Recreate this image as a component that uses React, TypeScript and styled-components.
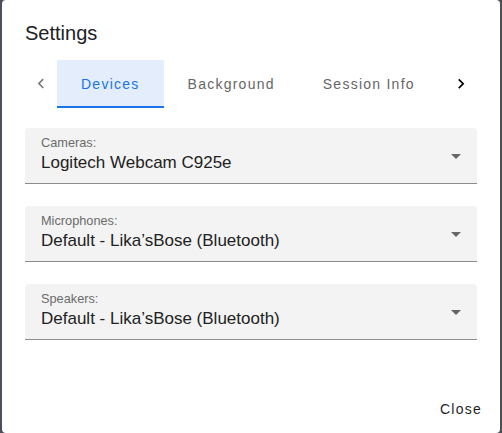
import React from "react";
import styled, { createGlobalStyle } from "styled-components";

const Global = createGlobalStyle`
  html, body { margin: 0; padding: 0; }
  body {
    background: #4b4f57;
    font-family: "Liberation Sans", Arial, Helvetica, sans-serif;
    overflow: hidden;
  }
`;

const Dialog = styled.div`
  box-sizing: border-box;
  margin-left: 2px;
  width: 498px;
  height: 433px;
  background: #ffffff;
  border-radius: 4px;
  display: flex;
  flex-direction: column;
`;

const Title = styled.h2`
  margin: 0;
  padding: 17px 23px 0;
  font-size: 20px;
  line-height: 32px;
  font-weight: 400;
  color: #202124;
`;

const Content = styled.div`
  padding: 11px 23px 0;
  display: flex;
  flex-direction: column;
`;

const TabsBar = styled.div`
  display: flex;
  align-items: stretch;
  height: 48px;
`;

const ScrollButton = styled.button<{ $active?: boolean }>`
  width: 32px;
  flex: none;
  border: 0;
  background: transparent;
  padding: 0;
  display: flex;
  align-items: center;
  justify-content: center;
  color: ${(p) => (p.$active ? "#000000" : "#7a7a7a")};
`;

const TabList = styled.div`
  flex: 1;
  display: flex;
  overflow: hidden;
`;

const Tab = styled.button<{ $selected?: boolean }>`
  flex: none;
  border: 0;
  padding: 2px 24px 0;
  margin: 0;
  font-family: inherit;
  font-size: 14px;
  line-height: 20px;
  letter-spacing: 1.25px;
  background: ${(p) => (p.$selected ? "#e3edfb" : "transparent")};
  color: ${(p) => (p.$selected ? "#1a73e8" : "#666666")};
  border-bottom: 2px solid ${(p) => (p.$selected ? "#1a73e8" : "transparent")};
  display: flex;
  align-items: center;
`;

const Fields = styled.div`
  margin-top: 20px;
  display: flex;
  flex-direction: column;
  gap: 22px;
`;

const SelectBox = styled.div`
  position: relative;
  box-sizing: border-box;
  height: 56px;
  background: #f3f3f3;
  border-radius: 4px 4px 0 0;
  border-bottom: 1px solid #8c8c8c;
  padding: 7px 16px 0;
  display: flex;
  flex-direction: column;
  gap: 2px;
`;

const Label = styled.span`
  font-size: 12.75px;
  line-height: 15px;
  color: #6b6b6b;
`;

const Value = styled.span`
  font-size: 17px;
  line-height: 22px;
  color: #222222;
`;

const Caret = styled.svg`
  position: absolute;
  right: 16px;
  top: 26px;
  width: 10px;
  height: 5px;
`;

const Footer = styled.div`
  margin-top: auto;
  display: flex;
  justify-content: flex-end;
  padding: 0 10px 6px 0;
`;

const TextButton = styled.button`
  border: 0;
  background: transparent;
  padding: 6px 8px;
  font-family: inherit;
  font-size: 14px;
  line-height: 24.5px;
  letter-spacing: 1.25px;
  color: #1f1f1f;
`;

const ChevronLeft = () => (
  <svg width="20" height="20" viewBox="0 0 24 24" fill="currentColor">
    <path d="M15.41 16.09l-4.58-4.59 4.58-4.59L14 5.5l-6 6 6 6z" />
  </svg>
);

const ChevronRight = () => (
  <svg width="20" height="20" viewBox="0 0 24 24" fill="currentColor">
    <path d="M8.59 16.34l4.58-4.59-4.58-4.59L10 5.75l6 6-6 6z" />
  </svg>
);

const fields = [
  { label: "Cameras:", value: "Logitech Webcam C925e" },
  { label: "Microphones:", value: "Default - Lika’sBose (Bluetooth)" },
  { label: "Speakers:", value: "Default - Lika’sBose (Bluetooth)" },
];

export default function App() {
  return (
    <>
      <Global />
      <Dialog>
        <Title>Settings</Title>
        <Content>
          <TabsBar>
            <ScrollButton>
              <ChevronLeft />
            </ScrollButton>
            <TabList>
              <Tab $selected>Devices</Tab>
              <Tab>Background</Tab>
              <Tab>Session Info</Tab>
            </TabList>
            <ScrollButton $active>
              <ChevronRight />
            </ScrollButton>
          </TabsBar>
          <Fields>
            {fields.map((f) => (
              <SelectBox key={f.label}>
                <Label>{f.label}</Label>
                <Value>{f.value}</Value>
                <Caret viewBox="0 0 10 5">
                  <path d="M0 0l5 5 5-5z" fill="#666666" />
                </Caret>
              </SelectBox>
            ))}
          </Fields>
        </Content>
        <Footer>
          <TextButton>Close</TextButton>
        </Footer>
      </Dialog>
    </>
  );
}
